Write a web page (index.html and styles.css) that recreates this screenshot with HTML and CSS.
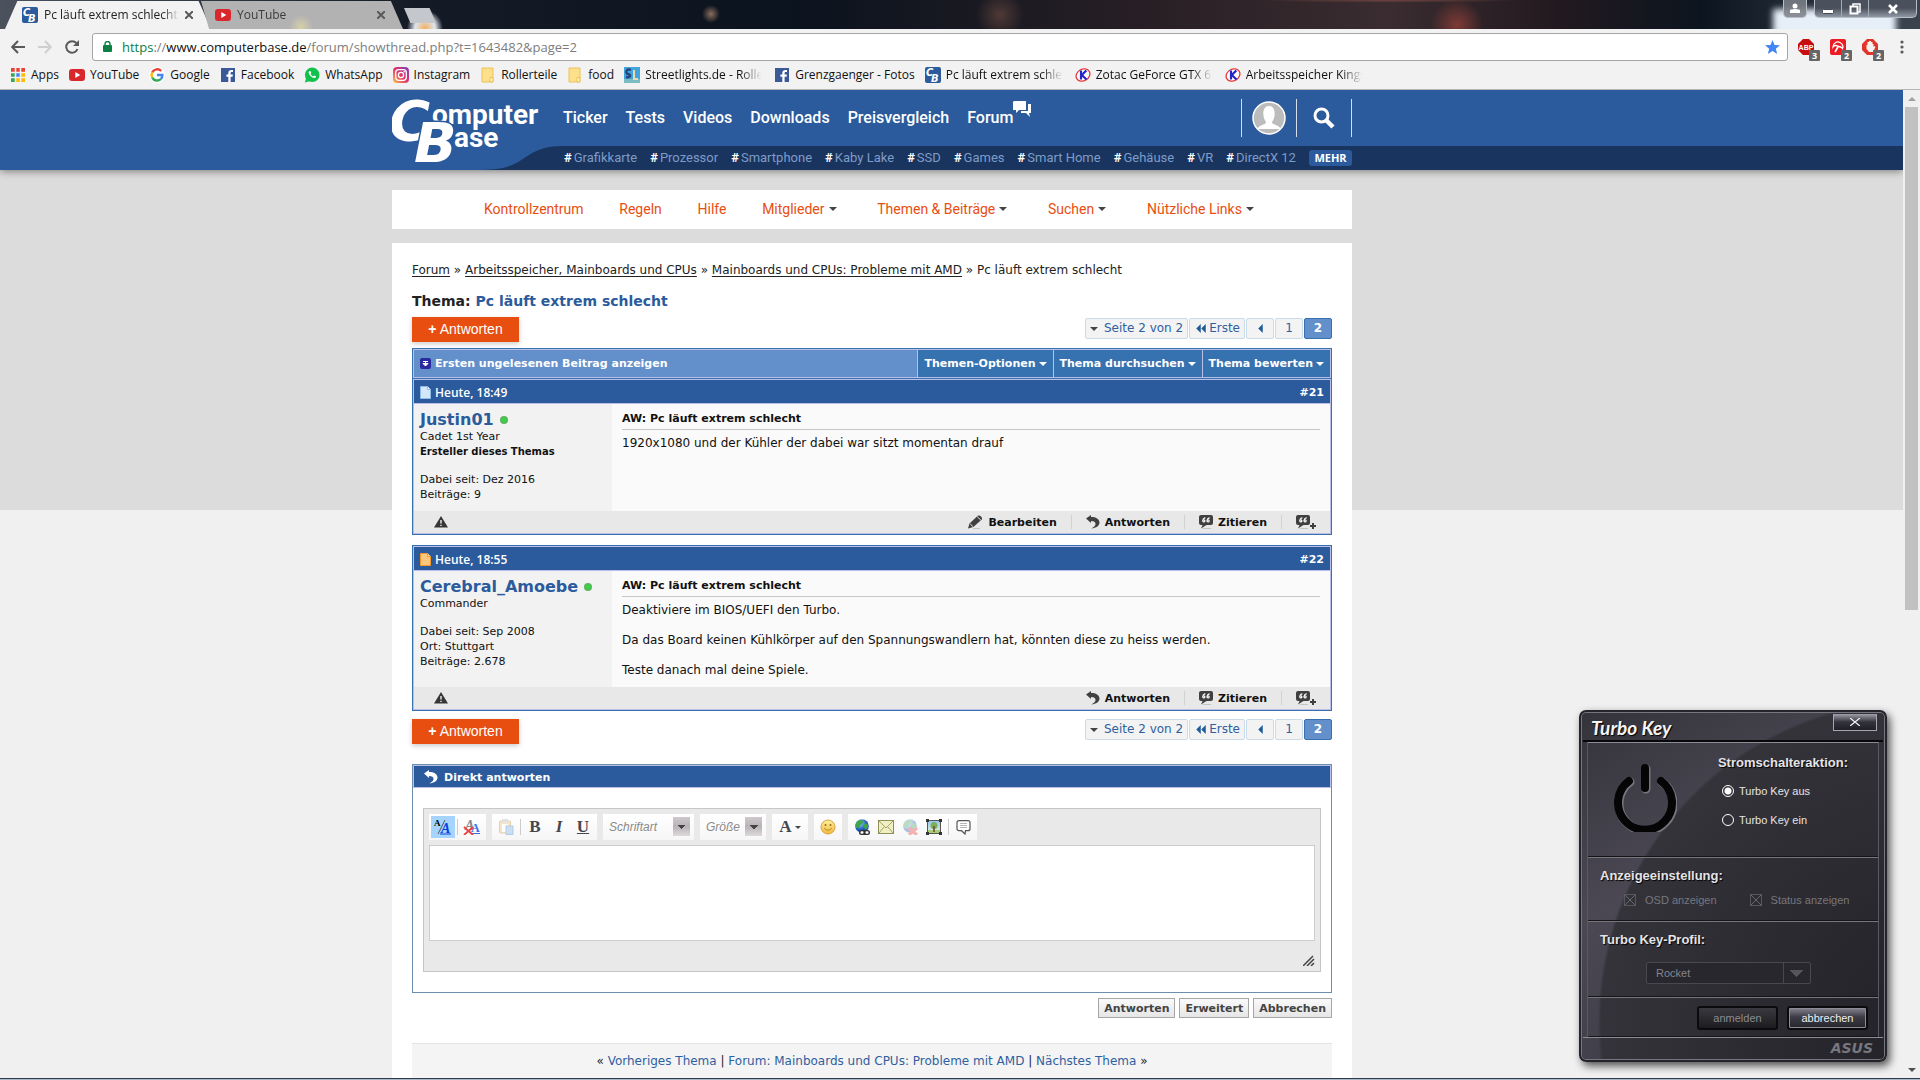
FILE: index.html
```html
<!DOCTYPE html>
<html lang="de">
<head>
<meta charset="utf-8">
<title>Pc läuft extrem schlecht - ComputerBase Forum</title>
<link rel="stylesheet" href="styles.css">
</head>
<body>
<svg class="defs" aria-hidden="true">
  <defs>
    <linearGradient id="gold" x1="0" y1="0" x2="0" y2="1"><stop offset="0" stop-color="#fdf0a0"/><stop offset="1" stop-color="#f0b93c"/></linearGradient>
    <linearGradient id="insta" x1="0" y1="1" x2="1" y2="0"><stop offset="0" stop-color="#fdc04a"/><stop offset=".5" stop-color="#e2336b"/><stop offset="1" stop-color="#7a3fc0"/></linearGradient>
    <linearGradient id="sky" x1="0" y1="0" x2="0" y2="1"><stop offset="0" stop-color="#8fc4f2"/><stop offset="1" stop-color="#e9f4d8"/></linearGradient>
    <radialGradient id="globe" cx=".35" cy=".3"><stop offset="0" stop-color="#9bd4ff"/><stop offset="1" stop-color="#1c56b4"/></radialGradient>
    <radialGradient id="dot"><stop offset="0" stop-color="#38d94a"/><stop offset=".6" stop-color="#3fc94a"/><stop offset="1" stop-color="#6da86a"/></radialGradient>
  </defs>
  <symbol id="i-cb" viewBox="0 0 16 16"><rect width="16" height="16" rx="2" fill="#2b5b9c"/><text x="1" y="9" font-family="DejaVu Sans" font-weight="700" font-style="italic" font-size="10" fill="#fff">C</text><text x="6" y="15" font-family="DejaVu Sans" font-weight="700" font-style="italic" font-size="10" fill="#fff" stroke="#2b5b9c" stroke-width="1" paint-order="stroke">B</text></symbol>
  <symbol id="i-yt" viewBox="0 0 16 16"><rect y="2" width="16" height="12" rx="3" fill="#d8282c"/><path d="M6.3 5v6l5-3z" fill="#fff"/></symbol>
  <symbol id="i-apps" viewBox="0 0 16 16"><path d="M1 1h4v4H1zM6 1h4v4H6zM11 1h4v4h-4z" fill="#ea4335"/><path d="M1 6h4v4H1z" fill="#34a853"/><path d="M6 6h4v4H6z" fill="#4285f4"/><path d="M11 6h4v4h-4z" fill="#fbbc05"/><path d="M1 11h4v4H1z" fill="#34a853"/><path d="M6 11h9v4H6z" fill="#fbbc05"/><path d="M5.500 0v16M10.500 0v16M0 5.500h16M0 10.500h16" stroke="#f2f2f2" stroke-width="1.600"/></symbol>
  <symbol id="i-google" viewBox="0 0 16 16"><circle cx="8" cy="8" r="8" fill="#fff"/><g fill="none" stroke-width="2.400"><path d="M12.200 4A5.600 5.600 0 0 0 3.200 5.400" stroke="#ea4335"/><path d="M3.200 5.400a5.600 5.600 0 0 0 0 5.200" stroke="#fbbc05"/><path d="M3.200 10.600a5.600 5.600 0 0 0 8.600 1.600" stroke="#34a853"/><path d="M11.800 12.200A5.600 5.600 0 0 0 13.400 8H8" stroke="#4285f4"/></g></symbol>
  <symbol id="i-fb" viewBox="0 0 16 16"><rect x="1" y="1" width="14" height="14" fill="#3b5998"/><path d="M10.600 15V9.800h2l.3-2.300h-2.300V6.200c0-.7.3-1.100 1.200-1.100h1.200V3c-3-.4-4.700.4-4.700 3v1.500H6.400v2.300h1.900V15z" fill="#fff"/></symbol>
  <symbol id="i-wa" viewBox="0 0 16 16"><circle cx="8.200" cy="7.800" r="7.300" fill="#12c04c"/><path d="M.8 15.500l1.400-4.600 3.400 3.300z" fill="#12c04c"/><path d="M5.300 4.200c-.8.800-1 2.100.8 4.200s3.900 3.200 5.500 2.100c.6-.6.500-1 .3-1.300l-1.700-.8-.9.900C7.900 8.800 7 7.800 6.600 6.900l.7-.9-.7-1.700c-.4-.3-.9-.4-1.300-.1z" fill="#fff"/></symbol>
  <symbol id="i-ig" viewBox="0 0 16 16"><rect width="16" height="16" rx="4" fill="url(#insta)"/><g fill="none" stroke="#fff" stroke-width="1.300"><rect x="2.700" y="2.700" width="10.600" height="10.600" rx="3"/><circle cx="8" cy="8" r="2.600"/></g><circle cx="11.200" cy="4.800" r=".8" fill="#fff"/></symbol>
  <symbol id="i-folder" viewBox="0 0 16 16"><path d="M2 1h11v14H2z" fill="#ffe08a" stroke="#eac25c"/><path d="M10 10.500h3V15h-3z" fill="#fff0b8" stroke="#eac25c"/></symbol>
  <symbol id="i-street" viewBox="0 0 16 16"><rect width="16" height="16" fill="#42a4dc"/><path d="M0 12h16v4H0z" fill="#7bbcc4"/><path d="M7 3c-5-2-6 3-3 4s3 4-2 3" fill="none" stroke="#26477c" stroke-width="2.400"/><path d="M10 3v9h4" fill="none" stroke="#e9dcae" stroke-width="2"/></symbol>
  <symbol id="i-k" viewBox="0 0 16 16"><ellipse cx="8" cy="8" rx="7.200" ry="5.800" transform="rotate(-30 8 8)" fill="#fff" stroke="#e43a3a" stroke-width="1.300"/><path d="M6 3.500v9M11.300 3.500L6.800 8l4.700 4.500" fill="none" stroke="#2424c8" stroke-width="2.200"/></symbol>
  <symbol id="i-warn" viewBox="0 0 14 12"><path d="M7 0l7 11.500H0z" fill="#363636"/><path d="M7 4v3.600M7 8.700v1.300" stroke="#fff" stroke-width="1.300"/></symbol>
  <symbol id="i-pen" viewBox="0 0 15 14"><path d="M5 13.500h7" stroke="#c4c4c4"/><path d="M0 13.500l1.500-5 8.300-7.800c2-1.200 5 1.500 4 3.700L5.400 12z" fill="#404040"/><path d="M2.200 8.900l2.800 2.700M9.200 1.700l3.700 3.500" stroke="#e8e8e8"/></symbol>
  <symbol id="i-reply" viewBox="0 0 14 14"><path d="M0 3.500L5 0v2c5 0 8.500 2 8.500 5.500S10 13 5.500 13.500C8 12 9.800 10.500 9.500 8.500 9.300 6.800 7.500 6 5 6v2z" fill="currentColor"/></symbol>
  <symbol id="i-quote" viewBox="0 0 14 14"><path d="M4 13.500h8" stroke="#c4c4c4"/><path d="M2 0h10q2 0 2 2v6q0 2-2 2H7.500L2 13.500 3.600 10H2Q0 10 0 8V2q0-2 2-2z" fill="#404040"/><path d="M6.300 2.700c-1.600.6-2.500 1.600-2.500 3a1 1 0 1 0 1.200-.8M10.600 2.700c-1.600.6-2.500 1.600-2.500 3a1 1 0 1 0 1.200-.8" fill="none" stroke="#f4f4f4" stroke-width="1.400"/></symbol>
  <symbol id="i-plus" viewBox="0 0 6 6"><path d="M3 0v6M0 3h6" stroke="#404040" stroke-width="2"/></symbol>
  <symbol id="i-caret" viewBox="0 0 8 4"><path d="M0 0h8L4 4z" fill="currentColor"/></symbol>
  <symbol id="i-left" viewBox="0 0 5 10"><path d="M5 0v10L0 5z" fill="currentColor"/></symbol>
  <symbol id="i-globe" viewBox="0 0 16 16"><circle cx="8" cy="7" r="6.800" fill="url(#globe)"/><path d="M3 3c2-3 6-2 6 0S6 6 5 8s-3 1-3.500-1S2 4 3 3zM10 5c2-1 4 0 4 2s-2 4-3 3-2-4-1-5z" fill="#3fa64a"/></symbol>
</svg>

<header class="titlebar">
  <div class="tab tab-active"><svg class="icon"><use href="#i-cb"/></svg><span class="tab-title">Pc läuft extrem schlecht - </span><button class="tab-close" aria-label="Tab schließen"><svg viewBox="0 0 8 8"><path d="M0 0l8 8M8 0L0 8"/></svg></button></div>
  <div class="tab tab-idle"><svg class="icon"><use href="#i-yt"/></svg><span class="tab-title">YouTube</span><button class="tab-close" aria-label="Tab schließen"><svg viewBox="0 0 8 8"><path d="M0 0l8 8M8 0L0 8"/></svg></button></div>
  <button class="new-tab" aria-label="Neuer Tab"></button>
  <div class="window-buttons">
    <button class="user-btn" aria-label="Profil"><svg width="12" height="11" viewBox="0 0 12 11"><circle cx="6" cy="3" r="2.500" fill="#fff"/><path d="M1 10V7.500q0-1.500 5-1.500t5 1.500V10z" fill="#fff"/></svg></button>
    <div class="win-group">
      <button aria-label="Minimieren"><svg width="12" height="12" viewBox="0 0 12 12"><rect x=".5" y="6.500" width="11" height="4" rx="1" fill="#fff" stroke="#444a54"/></svg></button>
      <button aria-label="Verkleinern"><svg width="12" height="12" viewBox="0 0 12 12"><path d="M4 3V1h7v8H9" fill="none" stroke="#fff" stroke-width="1.500"/><rect x="1.500" y="3.500" width="7" height="7" fill="none" stroke="#fff" stroke-width="2"/></svg></button>
      <button class="win-close" aria-label="Schließen"><svg width="12" height="12" viewBox="0 0 12 12"><path d="M2 2l8 8M10 2l-8 8" stroke="#fff" stroke-width="2.600"/></svg></button>
    </div>
  </div>
</header>

<div class="toolbar">
  <button class="nav-btn" aria-label="Zurück"><svg width="14" height="14" viewBox="0 0 14 14"><path d="M14 7H1.500M7 1L1.200 7 7 13"/></svg></button>
  <button class="nav-btn nav-off" aria-label="Vor"><svg width="14" height="14" viewBox="0 0 14 14"><path d="M0 7h12.500M7 1l5.800 6L7 13"/></svg></button>
  <button class="nav-btn" aria-label="Neu laden"><svg width="14" height="14" viewBox="0 0 14 14"><path d="M12.500 9A5.800 5.800 0 1 1 11.500 3.200"/><path d="M14 0v6H8z" fill="#5a5a5a" stroke="none"/></svg></button>
  <div class="omnibox">
    <svg width="9" height="11" viewBox="0 0 9 11"><rect y="4" width="9" height="7" rx="1" fill="#0b8043"/><path d="M2 5V3a2.500 2.500 0 0 1 5 0v2" fill="none" stroke="#0b8043" stroke-width="1.400"/></svg>
    <span class="url"><span class="url-scheme">https</span>://<span class="url-host">www.computerbase.de</span>/forum/showthread.php?t=1643482&amp;page=2</span>
    <svg width="15" height="14" viewBox="0 0 15 14"><path d="M7.500 0l2 4.900 5.500.4-4.200 3.400 1.400 5.300-4.700-2.900L2.800 14l1.400-5.300L0 5.300l5.500-.4z" fill="#4285f4"/></svg>
  </div>
  <div class="extensions">
    <button class="ext" aria-label="Adblock Plus"><svg width="16" height="16" viewBox="0 0 16 16"><path d="M5 0h6l5 5v6l-5 5H5l-5-5V5z" fill="#c70d0d"/><text x="8" y="11" text-anchor="middle" font-family="Liberation Sans" font-weight="700" font-size="7" fill="#fff">ABP</text></svg><span class="badge">3</span></button>
    <button class="ext" aria-label="Avira"><svg width="16" height="16" viewBox="0 0 16 16"><rect width="16" height="16" rx="2" fill="#ec1b24"/><path d="M3 8C3 4 7 2 10 3.500S13.500 8 12.500 9.500C11.500 8 10 7.500 8.500 7.500 6 6 4 6.500 3 8z" fill="none" stroke="#fff" stroke-width="1.300"/><path d="M8.500 7L5 13" stroke="#fff" stroke-width="1.600"/></svg><span class="badge">2</span></button>
    <button class="ext" aria-label="AdBlock"><svg width="16" height="16" viewBox="0 0 16 16"><path d="M5 0h6l5 5v6l-5 5H5l-5-5V5z" fill="#e3342b"/><path d="M4.500 10V6h1V3h1.500V2h2v1h1.500v2h1v3l1-1 1 1-2.500 5H7z" fill="#f4f0ec"/></svg><span class="badge">2</span></button>
  </div>
  <button class="menu-btn" aria-label="Menü"><svg width="4" height="14" viewBox="0 0 4 14"><circle cx="2" cy="2" r="1.600"/><circle cx="2" cy="7" r="1.600"/><circle cx="2" cy="12" r="1.600"/></svg></button>
</div>

<nav class="bookmarks">
  <a href="#"><svg class="icon"><use href="#i-apps"/></svg><span>Apps</span></a>
  <a href="#"><svg class="icon"><use href="#i-yt"/></svg><span>YouTube</span></a>
  <a href="#"><svg class="icon"><use href="#i-google"/></svg><span>Google</span></a>
  <a href="#"><svg class="icon"><use href="#i-fb"/></svg><span>Facebook</span></a>
  <a href="#"><svg class="icon"><use href="#i-wa"/></svg><span>WhatsApp</span></a>
  <a href="#"><svg class="icon"><use href="#i-ig"/></svg><span>Instagram</span></a>
  <a href="#"><svg class="icon"><use href="#i-folder"/></svg><span>Rollerteile</span></a>
  <a href="#"><svg class="icon"><use href="#i-folder"/></svg><span>food</span></a>
  <a href="#"><svg class="icon"><use href="#i-street"/></svg><span class="fade">Streetlights.de - Roller</span></a>
  <a href="#"><svg class="icon"><use href="#i-fb"/></svg><span>Grenzgaenger - Fotos</span></a>
  <a href="#"><svg class="icon"><use href="#i-cb"/></svg><span class="fade">Pc läuft extrem schlec</span></a>
  <a href="#"><svg class="icon"><use href="#i-k"/></svg><span class="fade">Zotac GeForce GTX 66</span></a>
  <a href="#"><svg class="icon"><use href="#i-k"/></svg><span class="fade">Arbeitsspeicher Kingst</span></a>
</nav>

<div class="viewport">
  <div class="page">
    <header class="site-header">
      <div class="wrap site-top">
        <a class="logo" href="#" aria-label="ComputerBase">
          <svg width="172" height="80" viewBox="0 0 172 80" fill="#fff" font-weight="700">
            <g font-family="Roboto, sans-serif" font-size="28"><text x="40" y="34">omputer</text><text x="62" y="57">ase</text></g>
            <g font-family="DejaVu Sans, sans-serif" font-style="italic" font-size="56" stroke="#2b5b9c" stroke-width="3" paint-order="stroke"><text x="-3" y="50">C</text><text x="22" y="72">B</text></g>
          </svg>
        </a>
        <nav class="main-nav">
          <a href="#">Ticker</a><a href="#">Tests</a><a href="#">Videos</a><a href="#">Downloads</a><a href="#">Preisvergleich</a>
          <a href="#">Forum<svg class="chat" width="18" height="16" viewBox="0 0 18 16"><path d="M1 0h12v9H6L3 12V9H0V1zM15 3h3v9h-2l1 4-4-4H8v-2h7z" fill="#fff"/></svg></a>
        </nav>
        <div class="user-tools">
          <button class="tool avatar" aria-label="Benutzer"><svg width="34" height="34" viewBox="0 0 34 34"><circle cx="17" cy="17" r="16" fill="#bcbcbc" stroke="#fff" stroke-width="1.500"/><path d="M5 28c3-5 9-4 9-7-4-5-4-16 3-16s7 11 3 16c0 3 6 2 9 7z" fill="#fff"/></svg></button>
          <button class="tool" aria-label="Suche"><svg width="22" height="22" viewBox="0 0 22 22"><circle cx="8.500" cy="8.500" r="6.500" fill="none" stroke="#fff" stroke-width="3"/><path d="M13.500 13.500L20 20" stroke="#fff" stroke-width="4.500"/></svg></button>
        </div>
      </div>
      <div class="tag-bar">
        <nav class="wrap tags">
          <svg class="swoosh" width="82" height="24" viewBox="0 0 82 24"><path d="M0 24C48 24 38 0 82 0V24z" fill="#19345e"/></svg>
          <a href="#"><b>#</b>Grafikkarte</a><a href="#"><b>#</b>Prozessor</a><a href="#"><b>#</b>Smartphone</a><a href="#"><b>#</b>Kaby Lake</a><a href="#"><b>#</b>SSD</a><a href="#"><b>#</b>Games</a><a href="#"><b>#</b>Smart Home</a><a href="#"><b>#</b>Gehäuse</a><a href="#"><b>#</b>VR</a><a href="#"><b>#</b>DirectX 12</a>
          <button class="more">MEHR</button>
        </nav>
      </div>
    </header>

    <nav class="wrap sub-nav">
      <a href="#">Kontrollzentrum</a><a href="#">Regeln</a><a href="#">Hilfe</a>
      <a class="drop" href="#">Mitglieder<svg class="caret"><use href="#i-caret"/></svg></a>
      <a class="drop" href="#">Themen &amp; Beiträge<svg class="caret"><use href="#i-caret"/></svg></a>
      <a class="drop" href="#">Suchen<svg class="caret"><use href="#i-caret"/></svg></a>
      <a href="#">Nützliche Links<svg class="caret"><use href="#i-caret"/></svg></a>
    </nav>

    <main class="wrap content">
      <nav class="crumbs"><a href="#">Forum</a> » <a href="#">Arbeitsspeicher, Mainboards und CPUs</a> » <a href="#">Mainboards und CPUs: Probleme mit AMD</a> » Pc läuft extrem schlecht</nav>
      <h1 class="thread-title">Thema: <a href="#">Pc läuft extrem schlecht</a></h1>

      <div class="actions actions-top">
        <button class="reply-btn"><b>+</b> Antworten</button>
        <nav class="pager">
          <a class="pages" href="#"><svg class="caret"><use href="#i-caret"/></svg>Seite 2 von 2</a>
          <a class="first" href="#"><svg class="arrow"><use href="#i-left"/></svg><svg class="arrow"><use href="#i-left"/></svg><span>Erste</span></a>
          <a class="num" href="#" aria-label="Vorherige Seite"><svg class="arrow"><use href="#i-left"/></svg></a>
          <a class="num" href="#">1</a>
          <a class="num current" href="#">2</a>
        </nav>
      </div>

      <div class="thread-tools frame">
        <a class="unread" href="#"><svg width="11" height="11" viewBox="0 0 11 11"><rect width="11" height="11" rx="2" fill="#2a2a9e"/><path d="M3 3.500h5M3 5.500h5L5.500 8zM5.500 3v3" stroke="#fff" fill="#fff"/></svg>Ersten ungelesenen Beitrag anzeigen</a>
        <button>Themen-Optionen<svg class="caret"><use href="#i-caret"/></svg></button>
        <button>Thema durchsuchen<svg class="caret"><use href="#i-caret"/></svg></button>
        <button>Thema bewerten<svg class="caret"><use href="#i-caret"/></svg></button>
      </div>

      <article class="post frame joined">
        <header class="post-head"><svg width="11" height="13" viewBox="0 0 11 13"><path d="M.5.500h7l3 3v9H.5z" fill="#d3e7fb" stroke="#8fbbe8"/><path d="M7.500.500v3h3" fill="#fff" stroke="#8fbbe8"/></svg><time>Heute, 18:49</time><a href="#">#21</a></header>
        <div class="post-body">
          <aside class="author">
            <a class="name" href="#">Justin01<svg class="online"><circle cx="4" cy="4" r="4" fill="url(#dot)"/></svg></a>
            <p>Cadet 1st Year</p><p class="starter">Ersteller dieses Themas</p>
            <p class="stats">Dabei seit: Dez 2016<br>Beiträge: 9</p>
          </aside>
          <section class="message"><h2>AW: Pc läuft extrem schlecht</h2><p>1920x1080 und der Kühler der dabei war sitzt momentan drauf</p></section>
        </div>
        <footer class="post-foot">
          <a class="report" href="#" aria-label="Melden"><svg width="14" height="12"><use href="#i-warn"/></svg></a>
          <a href="#"><svg width="15" height="14"><use href="#i-pen"/></svg>Bearbeiten</a>
          <a href="#"><svg width="14" height="14"><use href="#i-reply"/></svg>Antworten</a>
          <a href="#"><svg width="14" height="14"><use href="#i-quote"/></svg>Zitieren</a>
          <a class="multi" href="#" aria-label="Mehrfach zitieren"><svg width="14" height="14"><use href="#i-quote"/></svg><svg class="plus" width="6" height="6"><use href="#i-plus"/></svg></a>
        </footer>
      </article>

      <article class="post frame">
        <header class="post-head"><svg width="11" height="13" viewBox="0 0 11 13"><path d="M.5.500h7l3 3v9H.5z" fill="#fcc67e" stroke="#f29a2e"/><path d="M7.500.500v3h3" fill="#ffe4bd" stroke="#f29a2e"/></svg><time>Heute, 18:55</time><a href="#">#22</a></header>
        <div class="post-body">
          <aside class="author">
            <a class="name" href="#">Cerebral_Amoebe<svg class="online"><circle cx="4" cy="4" r="4" fill="url(#dot)"/></svg></a>
            <p>Commander</p>
            <p class="stats">Dabei seit: Sep 2008<br>Ort: Stuttgart<br>Beiträge: 2.678</p>
          </aside>
          <section class="message"><h2>AW: Pc läuft extrem schlecht</h2><p>Deaktiviere im BIOS/UEFI den Turbo.<br><br>Da das Board keinen Kühlkörper auf den Spannungswandlern hat, könnten diese zu heiss werden.<br><br>Teste danach mal deine Spiele.</p></section>
        </div>
        <footer class="post-foot">
          <a class="report" href="#" aria-label="Melden"><svg width="14" height="12"><use href="#i-warn"/></svg></a>
          <a href="#"><svg width="14" height="14"><use href="#i-reply"/></svg>Antworten</a>
          <a href="#"><svg width="14" height="14"><use href="#i-quote"/></svg>Zitieren</a>
          <a class="multi" href="#" aria-label="Mehrfach zitieren"><svg width="14" height="14"><use href="#i-quote"/></svg><svg class="plus" width="6" height="6"><use href="#i-plus"/></svg></a>
        </footer>
      </article>

      <div class="actions actions-bottom">
        <button class="reply-btn"><b>+</b> Antworten</button>
        <nav class="pager">
          <a class="pages" href="#"><svg class="caret"><use href="#i-caret"/></svg>Seite 2 von 2</a>
          <a class="first" href="#"><svg class="arrow"><use href="#i-left"/></svg><svg class="arrow"><use href="#i-left"/></svg><span>Erste</span></a>
          <a class="num" href="#" aria-label="Vorherige Seite"><svg class="arrow"><use href="#i-left"/></svg></a>
          <a class="num" href="#">1</a>
          <a class="num current" href="#">2</a>
        </nav>
      </div>

      <form class="quick-reply">
        <h2><svg width="14" height="14"><use href="#i-reply"/></svg><label for="reply-text">Direkt antworten</label></h2>
        <div class="editor">
          <div class="tools">
            <div class="group">
              <button type="button" class="on" aria-label="Quelltext"><svg width="18" height="16" viewBox="0 0 18 16"><text x="0" y="7" font-family="Liberation Serif" font-weight="700" font-size="9">A</text><path d="M4 15L11 1" stroke="#555"/><text x="7" y="14" font-family="Liberation Serif" font-weight="700" font-style="italic" font-size="14" fill="#0a3fe0">A</text><path d="M6 15h11" stroke="#0a3fe0"/></svg></button><i class="sep"></i>
              <button type="button" aria-label="Formatierung entfernen"><svg width="18" height="16" viewBox="0 0 18 16"><text x="2" y="11" font-family="Liberation Serif" font-style="italic" font-weight="700" font-size="14" fill="#888">A</text><text x="8" y="13" font-family="Liberation Serif" font-weight="700" font-size="12" fill="#3a6cf0">A</text><path d="M8 14.500h9" stroke="#3a6cf0"/><path d="M1 8l9 8M10 8l-9 8" stroke="#ee4040" stroke-width="1.800"/></svg></button>
            </div>
            <div class="group">
              <button type="button" aria-label="Einfügen"><svg width="16" height="16" viewBox="0 0 16 16" opacity=".5"><rect x="1.500" y="2" width="11" height="12" rx="1" fill="#f6cf98" stroke="#d2a566"/><rect x="4" y="0" width="6" height="4" fill="#c9c9c9"/><path d="M4 5h6v8H4z" fill="#fff"/><path d="M8 7h7v8.500H8z" fill="#9cc8ec" stroke="#6a9fcc"/></svg></button><i class="sep"></i>
              <button type="button" class="glyph">B</button><button type="button" class="glyph ital">I</button><button type="button" class="glyph under">U</button>
            </div>
            <select class="combo font" aria-label="Schriftart"><option>Schriftart</option></select>
            <select class="combo size" aria-label="Größe"><option>Größe</option></select>
            <div class="group"><button type="button" class="glyph color" aria-label="Textfarbe">A<svg width="6" height="3"><use href="#i-caret"/></svg></button></div>
            <div class="group"><button type="button" aria-label="Smiley"><svg width="16" height="16" viewBox="0 0 16 16"><circle cx="8" cy="8" r="7" fill="url(#gold)" stroke="#dba43a"/><circle cx="5.500" cy="6" r="1" fill="#9a6a1a"/><circle cx="10.500" cy="6" r="1" fill="#9a6a1a"/><path d="M4 9q4 4.500 8 0" fill="none" stroke="#c08a2a"/></svg></button></div>
            <div class="group">
              <button type="button" aria-label="Link"><svg width="16" height="16" viewBox="0 0 16 16"><use href="#i-globe"/><rect x="5" y="11" width="11" height="5" rx="2.500" fill="#333"/><rect x="6.500" y="12.300" width="3" height="2.400" rx="1" fill="#fff"/><rect x="11.500" y="12.300" width="3" height="2.400" rx="1" fill="#fff"/></svg></button>
              <button type="button" aria-label="E-Mail"><svg width="16" height="14" viewBox="0 0 16 14"><rect x=".5" y=".5" width="15" height="13" fill="#f0efc2" stroke="#8f9058"/><path d="M1 1l7 7 7-7M1 13l5-6M15 13l-5-6" fill="none" stroke="#a5a66c"/></svg></button>
              <button type="button" aria-label="Link entfernen"><svg width="16" height="16" viewBox="0 0 16 16" opacity=".35"><use href="#i-globe"/><path d="M7 9l8 7M15 9l-8 7" stroke="#f03030" stroke-width="3"/></svg></button>
              <button type="button" aria-label="Grafik"><svg width="16" height="16" viewBox="0 0 16 16"><rect x="1.500" y="1.500" width="13" height="13" fill="url(#sky)" stroke="#555"/><path d="M2 11h12v3H2z" fill="#a8cc74"/><circle cx="8" cy="6.500" r="3.500" fill="#7fae58"/><path d="M8 7v6" stroke="#6a4a28" stroke-width="1.500"/><path d="M0 0h3v3H0zM13 0h3v3h-3zM0 13h3v3H0zM13 13h3v3h-3z" fill="#333"/></svg></button><i class="sep"></i>
              <button type="button" aria-label="Zitat"><svg width="15" height="15" viewBox="0 0 15 15"><path d="M3 .7h9q2 0 2 2v6q0 2-2 2H9.500L9 14l-3.500-3.300H3q-2 0-2-2v-6q0-2 2-2z" fill="#fff" stroke="#555" stroke-width="1.200"/><path d="M4 3.500h7M4 5.500h7M4 7.500h7" stroke="#b5b5b5"/></svg></button>
            </div>
          </div>
          <textarea id="reply-text"></textarea>
          <div class="grip"><svg width="12" height="11" viewBox="0 0 12 11"><path d="M0 11L10 1M4 11l7-7M8 11l3-3" stroke="#444" stroke-width="1.500"/></svg></div>
        </div>
      </form>
      <div class="form-buttons"><button>Antworten</button><button>Erweitert</button><button>Abbrechen</button></div>
      <nav class="thread-nav">« <a href="#">Vorheriges Thema</a> | <a href="#">Forum: Mainboards und CPUs: Probleme mit AMD</a> | <a href="#">Nächstes Thema</a> »</nav>
    </main>
  </div>
  <div class="scrollbar"><svg class="caret up"><use href="#i-caret"/></svg><div class="thumb"></div><svg class="caret"><use href="#i-caret"/></svg></div>
</div>
<div class="taskbar-edge"></div>

<section class="turbo">
  <header class="turbo-title"><h2>Turbo Key</h2><button class="turbo-close" aria-label="Schließen"><svg width="10" height="8" viewBox="0 0 10 8"><path d="M0 0l10 8M10 0L0 8" stroke="#f2f2f6" stroke-width="1.300"/></svg></button></header>
  <div class="turbo-body">
    <div class="turbo-power">
      <svg width="64" height="70" viewBox="0 0 64 70" fill="none" stroke-linecap="round"><g stroke="#77757f" stroke-width="9"><path d="M33 7v20M17 20A27 27 0 1 0 49 20" /></g><g stroke="#050505" stroke-width="8"><path d="M32 6v20M16 19A27 27 0 1 0 48 19"/></g></svg>
      <fieldset><legend>Stromschalteraktion:</legend>
        <label><input type="radio" name="power" checked>Turbo Key aus</label>
        <label><input type="radio" name="power">Turbo Key ein</label>
      </fieldset>
    </div>
    <div class="turbo-display"><h3>Anzeigeeinstellung:</h3>
      <div class="checks"><label><input type="checkbox" checked disabled>OSD anzeigen</label><label><input type="checkbox" checked disabled>Status anzeigen</label></div>
    </div>
    <div class="turbo-profile"><h3><label for="profile">Turbo Key-Profil:</label></h3><select id="profile" disabled><option>Rocket</option></select></div>
    <div class="turbo-buttons"><button disabled>anmelden</button><button class="primary">abbrechen</button></div>
  </div>
  <footer class="turbo-foot">ASUS</footer>
</section>
</body>
</html>
```
FILE: styles.css
```css
* { box-sizing: border-box; }

body {
  margin: 0;
  height: 100vh;
  display: flex;
  flex-direction: column;
  position: relative;
  overflow: hidden;
  background: #f2f2f2;
  font: 12px/15px Verdana, "DejaVu Sans", sans-serif;
  color: #222;
}

a { color: inherit; text-decoration: none; }
button { font: inherit; color: inherit; border: 0; padding: 0; background: none; }
h1, h2, h3, p, fieldset { margin: 0; padding: 0; border: 0; font-size: inherit; }
svg { flex: none; display: block; }
.defs { position: absolute; width: 0; height: 0; }
.icon { width: 16px; height: 16px; }
.caret { width: 8px; height: 4px; }

/* Browser frame */
.titlebar {
  flex: none;
  display: flex;
  height: 29px;
  padding-left: 5px;
  overflow: hidden;
  font: 12px/16px "Open Sans", sans-serif;
  background:
    radial-gradient(circle at 425px 28px, #f0b060 0, #dfe6ee 10px, transparent 18px),
    radial-gradient(circle at 711px 14px, #8a6d5c 0, transparent 9px),
    radial-gradient(circle at 1000px 15px, #4f3a36 0, transparent 24px),
    radial-gradient(circle at 1457px 25px, #7e3a35 0, transparent 26px),
    radial-gradient(ellipse at 1390px 0, #6f4440 0, transparent 130px),
    linear-gradient(90deg, #4b525d 0, #141b26 420px, #0b131e 800px, #281f25 1150px, #3a2c30 1390px, #22191f 1560px, #0c151f 1700px, #39424d 1900px);
}
.tab { display: flex; align-items: center; width: 206px; height: 28px; margin-top: 1px; padding: 0 18px 0 17px; gap: 6px; }
.tab-active { background: #f2f2f2; clip-path: polygon(0 100%, 6% 0, 94% 0, 100% 100%); }
.tab-idle { width: 202px; margin-left: -10px; background: radial-gradient(circle at 100px 26px, #d6d0a8, transparent 12px), #b2b2b3; clip-path: polygon(4% 100%, 0 0, 94% 0, 100% 100%); padding-left: 14px; color: #3c3c3c; }
.tab-title { flex: 1; overflow: hidden; white-space: nowrap; mask-image: linear-gradient(90deg, #000 88%, transparent); }
.tab-close { width: 8px; height: 8px; }
.tab-close svg { width: 8px; height: 8px; stroke: #5a5a5a; stroke-width: 2; }
.new-tab { width: 32px; height: 15px; margin: 8px 0 0 1px; background: #c4c8cc; clip-path: polygon(0 0, 80% 0, 100% 100%, 20% 100%); }
.window-buttons { position: relative; display: flex; gap: 7px; margin-left: auto; padding: 0 3px 0 10px; }
.window-buttons::before { content: ""; position: absolute; left: 0; right: 24px; top: 9px; bottom: -10px; background: #e6eef8; filter: blur(3px); }
.window-buttons > * { position: relative; }
.user-btn, .win-group { height: 18px; border: 1px solid #b9bec6; border-top: 0; border-radius: 0 0 5px 5px; }
.user-btn { width: 24px; display: grid; place-items: center; background: #7b8088dd; }
.win-group { display: flex; background: linear-gradient(#4a515c 8px, #8f98a5); }
.win-group button { width: 27px; display: grid; place-items: center; border-right: 1px solid #a6acb5; }
.win-group .win-close { width: 47px; border: 0; }

.toolbar { flex: none; display: flex; align-items: center; height: 35px; padding: 0 16px 0 11px; background: #f2f2f2; }
.nav-btn { width: 18px; margin-right: 9px; }
.nav-btn svg { fill: none; stroke: #5a5a5a; stroke-width: 2; }
.nav-off svg { stroke: #cfcfcf; }
.omnibox {
  flex: 1;
  display: flex;
  align-items: center;
  gap: 10px;
  height: 28px;
  padding: 0 7px 0 10px;
  background: #fff;
  border: 1px solid #a6a6a6;
  border-radius: 3px;
  font: 13px/18px "Open Sans", sans-serif;
}
.url { flex: 1; color: #7d7d7d; }
.url-scheme { color: #0b8043; }
.url-host { color: #111; }
.extensions { display: flex; gap: 16px; margin: 0 22px 0 10px; }
.ext { position: relative; width: 16px; height: 16px; }
.badge { position: absolute; left: 11px; top: 11px; width: 11px; height: 11px; border-radius: 1px; background: #666; color: #fff; font: 700 9px/11px "Open Sans", sans-serif; }
.menu-btn svg { fill: #5a5a5a; }

.bookmarks { flex: none; display: flex; gap: 10px; height: 26px; padding: 3px 10px 0; border-bottom: 1px solid #b6b6b6; font: 12px/16px "Open Sans", sans-serif; color: #111; }
.bookmarks a { display: flex; gap: 5px; height: 16px; white-space: nowrap; }
.bookmarks .fade { width: 119px; overflow: hidden; mask-image: linear-gradient(90deg, #000 80%, transparent 98%); }

.viewport { flex: 1; min-height: 0; display: flex; }
.page { --ad: 159px; flex: 1; overflow: hidden; background: linear-gradient(#dcdcdc 420px, #f0f0f0 420px); }
.wrap { width: 960px; margin: 0 auto; }
.site-header, .sub-nav, .content { position: relative; }
.site-header { padding-right: var(--ad); background: #2b5b9c; box-shadow: 0 1px 8px #0007; height: 80px; }
.scrollbar { flex: none; width: 17px; display: flex; flex-direction: column; align-items: center; padding: 7px 0 6px; background: #f0f0f0; color: #505050; }
.scrollbar .up { transform: rotate(180deg); color: #a0a0a0; }
.thumb { width: 13px; height: 503px; margin: 6px 0 auto; background: #c1c1c1; }
.taskbar-edge { flex: none; height: 2px; background: linear-gradient(#2d3b4c 1px, #a9b8c6 1px); }

/* Site header */
.site-top { display: flex; height: 56px; }
.logo { width: 171px; height: 80px; position: relative; z-index: 1; flex: none; }
.main-nav { display: flex; align-items: center; gap: 18px; font: 500 16px/20px Roboto, sans-serif; color: #fff; }
.main-nav a { position: relative; }
.chat { position: absolute; left: 100%; top: -7px; }
.user-tools { display: flex; margin: 9px 0 0 auto; height: 38px; border-left: 1px solid #d5dcea; }
.tool { width: 55px; display: grid; place-items: center; border-right: 1px solid #d5dcea; }
.tag-bar { margin-right: calc(0px - var(--ad)); padding-right: var(--ad); background: linear-gradient(90deg, transparent 50%, #19345e 50%); }
.tags { display: flex; align-items: center; justify-content: space-between; height: 24px; padding-left: 172px; position: relative; background: linear-gradient(90deg, transparent 171px, #19345e 171px); font: 13px/16px Roboto, sans-serif; color: #7f9cc8; }
.tags b { color: #fff; margin-right: 2px; }
.swoosh { position: absolute; left: 90px; top: 0; }
.more { height: 16px; width: 43px; border-radius: 3px; background: #2b5b9c; color: #fff; font: 700 11px/16px "Open Sans", sans-serif; }

.sub-nav, .content { left: calc(var(--ad) / -2); }
.sub-nav { display: flex; justify-content: space-between; align-items: center; height: 39px; margin-top: 20px; padding: 0 98px 2px 92px; background: #fff; color: #e84e0f; font: 14px/18px Roboto, sans-serif; }
.sub-nav a { display: flex; align-items: center; gap: 4px; }
.sub-nav .drop { padding-right: 5px; }
.sub-nav .caret { color: #444; }

/* Thread */
.content { margin-top: 14px; padding: 19px 20px 40px; background: #fff; }
.crumbs { line-height: 16px; }
.crumbs a { text-decoration: underline; text-underline-offset: 2px; }
.thread-title { margin-top: 13px; font-size: 14px; line-height: 20px; }
.thread-title a, .name { color: #2b5b9c; }
.actions { display: flex; justify-content: space-between; align-items: flex-start; }
.actions-top { margin: 6px 0; }
.actions-top .pager { margin-top: 1px; }
.actions-bottom { margin: -2px 0 20px; }
.reply-btn { width: 107px; height: 25px; background: #e84e0f; color: #fff; font: 14px/25px "Liberation Sans", sans-serif; box-shadow: 0 2px 5px #0003; }
.pager { display: flex; gap: 1px; color: #2f5f9f; }
.pager a { display: flex; align-items: center; justify-content: center; height: 21px; border: 1px solid #cadcea; border-radius: 2px; background: #f3f3f3; }
.pager .pages { gap: 6px; padding: 0 4px; }
.pager .pages .caret { color: #444; }
.pager .first { padding: 0 4px 0 6px; }
.pager .first span { padding-left: 3px; }
.pager .num { width: 28px; }
.pager .current { background: #638fca; border-color: #3771b0; color: #fff; font-weight: 700; }
.arrow { width: 5px; height: 9px; color: #1e5b9b; }

.frame { border: 1px solid #3771b0; box-shadow: inset 0 0 0 1px #b9bfe6; padding: 1px; }
.thread-tools { display: flex; height: 31px; font-size: 11px; font-weight: 700; color: #fff; background: #638fca; }
.unread { flex: 1; display: flex; align-items: center; gap: 4px; padding-left: 6px; }
.thread-tools button { display: flex; align-items: center; gap: 3px; padding: 0 6px; background: #3671b0; border-left: 1px solid #b9bfe6; font-weight: 700; }

.post { margin-bottom: 10px; }
.joined { margin-top: -1px; }
.post-head { display: flex; align-items: center; gap: 4px; height: 24px; padding: 1px 6px 0; border-bottom: 1px solid #b9bfe6; background: #2b5b9c; color: #fff; font-size: 11px; font-weight: 700; }
.post-head time { flex: 1; font: 600 12px/15px "Open Sans", sans-serif; }
.post-body { display: flex; color: #111; }
.author { width: 198px; padding: 7px 6px 9px; background: #f2f2f2; font-size: 11px; }
.name { display: flex; align-items: center; gap: 6px; font-size: 16px; line-height: 18px; font-weight: 700; }
.online { width: 8px; height: 8px; }
.starter { font-weight: 700; font-size: 10px; }
.stats { margin-top: 13px; }
.message { flex: 1; padding: 8px 10px 9px; background: #fafafa; }
.message h2 { padding-bottom: 3px; border-bottom: 1px solid #c6c6c6; font-size: 11px; line-height: 14px; }
.message p { padding-top: 6px; }
.post-foot { display: flex; justify-content: flex-end; align-items: center; height: 22px; background: #e8e8e8; color: #000; font-size: 11px; font-weight: 700; }
.post-foot a { display: flex; align-items: center; gap: 5px; height: 14px; padding: 0 14px; border-left: 1px solid #d2d2d2; color: #111; }
.post-foot svg { color: #404040; }
.post-foot .report { margin-right: auto; padding-left: 20px; border: 0; }
.post-foot .report + a { border: 0; }
.post-foot .multi { gap: 0; align-items: flex-end; }

.quick-reply { border: 1px solid #6b8fac; }
.quick-reply h2 { display: flex; align-items: center; gap: 6px; height: 23px; padding: 1px 0 0 10px; border: 1px solid #b9bfe6; background: #2b5b9c; color: #fff; font-size: 11px; }
.editor { margin: 20px 10px; padding: 5px 5px 0; border: 1px solid #c6c6c6; background: #e9e9e9; }
.tools { display: flex; gap: 6px; height: 26px; }
.group { display: flex; align-items: center; padding: 0 2px; background: linear-gradient(#fff, #f6f6f6); }
.group button { width: 24px; height: 22px; display: grid; place-items: center; }
.group .on { background: #a5d5ff; }
.sep { width: 1px; height: 16px; margin: 0 2px; background: #ccc; }
.group .glyph { font: 700 17px/22px "Liberation Serif", serif; color: #46464e; }
.group .ital { font-style: italic; }
.group .under { text-decoration: underline; }
.group .color { display: flex; align-items: center; justify-content: center; gap: 3px; width: 32px; }
.combo {
  appearance: none;
  width: 91px;
  padding: 0 6px;
  border: 0;
  border-radius: 0;
  color: #8a8a8a;
  font: italic 12px/22px "Liberation Sans", sans-serif;
  background:
    linear-gradient(45deg, transparent 50%, #444 50%) right 12px top 11px / 4px 4px no-repeat,
    linear-gradient(-45deg, transparent 50%, #444 50%) right 8px top 11px / 4px 4px no-repeat,
    linear-gradient(#cfc9cd, #b8b3b6 50%, #dedadc) right 4px top 3px / 17px 19px no-repeat,
    linear-gradient(#fff, #f6f6f6);
}
.size { width: 66px; }
textarea { display: block; width: 100%; height: 96px; margin-top: 5px; border: 1px solid #cdcdcd; background: #fff; resize: none; }
.grip { display: flex; justify-content: flex-end; align-items: flex-end; height: 30px; padding-bottom: 5px; }
.form-buttons { display: flex; justify-content: flex-end; gap: 4px; margin-top: 5px; }
.form-buttons button { height: 20px; padding: 1px 5px 0; border: 1px solid #a6a6a6; background: linear-gradient(#fafafa, #e6e6e6); color: #444; font-size: 11px; font-weight: 700; }
.thread-nav { height: 36px; margin-top: 25px; border-top: 1px solid #e3e3e3; background: #f4f4f4; line-height: 35px; text-align: center; }
.thread-nav a { color: #2f5f9f; }

/* Turbo Key window, floating over the browser */
.turbo {
  position: absolute;
  right: 33px;
  bottom: 18px;
  width: 308px;
  padding: 2px;
  border: 2px solid #24242a;
  border-radius: 7px;
  color: #e4e4e8;
  font: 11px/14px "Liberation Sans", sans-serif;
  background: radial-gradient(circle 320px at 340px 310px, #232228 0, #2c2b32 55%, #34333a 100%, transparent 101%), linear-gradient(150deg, #34333a, #4b4854 40%, #37363e);
  box-shadow: inset 0 0 0 1px #77767f, 3px 4px 9px #000a;
}
.turbo-title { display: flex; justify-content: space-between; height: 28px; padding: 0 6px 0 8px; border-bottom: 2px solid #08080a; }
.turbo-title h2 { font: italic 700 19px/27px Lato, sans-serif; color: #f4f4f4; text-shadow: 1px 1px 1px #000; }
.turbo-close { width: 44px; height: 17px; display: grid; place-items: center; border: 1px solid #a5a5ae; border-top: 0; background: linear-gradient(#a0a0ac, #33333c 50%, #202028); }
.turbo-body { margin: 0 4px; border: 1px solid #5a5963; border-top-color: #8d8c96; border-bottom: 0; }
.turbo-body > div { border-bottom: 1px solid #77767e; box-shadow: inset 0 -1px #151518; }
.turbo-power { display: flex; justify-content: space-between; height: 115px; padding: 19px 30px 0 25px; }
.turbo h3, .turbo legend { padding: 0; font-size: 13px; line-height: 18px; font-weight: 700; text-shadow: 1px 1px 1px #000; }
.turbo legend { margin-bottom: 4px; }
.turbo fieldset { min-width: 0; margin-top: -8px; }
.turbo label { display: flex; align-items: center; gap: 5px; }
.turbo fieldset label { height: 29px; padding-left: 4px; }
.turbo input { appearance: none; margin: 0; width: 12px; height: 12px; border: 1px solid #fff; }
.turbo input[type=radio] { border-radius: 50%; }
.turbo input[type=radio]:checked { background: radial-gradient(#fff 3px, transparent 4px); }
.turbo input[type=checkbox] { border-color: #56565d; background: linear-gradient(45deg, transparent 47%, #66666d 48% 52%, transparent 53%), linear-gradient(-45deg, transparent 47%, #66666d 48% 52%, transparent 53%); }
.turbo-display { height: 64px; padding: 9px 10px 0 12px; }
.checks { display: flex; gap: 33px; padding: 8px 0 0 24px; color: #77777e; }
.checks label { gap: 9px; }
.turbo-profile { height: 76px; padding: 9px 12px 0; }
.turbo-profile select {
  appearance: none;
  display: block;
  width: 165px;
  height: 22px;
  margin: 13px 0 0 46px;
  padding: 0 9px;
  border: 1px solid #48484e;
  border-radius: 2px;
  color: #85858c;
  opacity: 1;
  font: 11px/20px "Liberation Sans", sans-serif;
  background:
    linear-gradient(45deg, transparent 50%, #55555c 50%) right 14px top 7px / 7px 7px no-repeat,
    linear-gradient(-45deg, transparent 50%, #55555c 50%) right 7px top 7px / 7px 7px no-repeat,
    linear-gradient(#48484e, #48484e) right 26px top 0 / 1px 100% no-repeat,
    #28272d;
}
.turbo-body .turbo-buttons { display: flex; justify-content: flex-end; gap: 9px; height: 39px; padding: 8px 10px 0 0; border-bottom: 0; }
.turbo-buttons button { width: 81px; height: 24px; border: 2px solid #0b0b0d; border-radius: 3px; background: linear-gradient(#3a393f, #1c1c20); color: #8b8b92; }
.turbo-buttons .primary { color: #eeeef2; background: linear-gradient(#85848f, #3d3c46 45%, #25252c); box-shadow: inset 0 0 0 1px #8c8b96; }
.turbo-foot { height: 21px; padding-right: 10px; border-top: 1px solid #8d8c96; text-align: right; color: #77777e; font: 700 italic 14px/20px "DejaVu Sans", sans-serif; }
```
